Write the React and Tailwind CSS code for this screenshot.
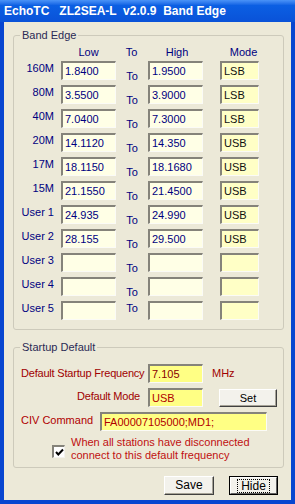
import React from "react";

const bands = [
  ["160M", "1.8400", "1.9500", "LSB"],
  ["80M", "3.5500", "3.9000", "LSB"],
  ["40M", "7.0400", "7.3000", "LSB"],
  ["20M", "14.1120", "14.350", "USB"],
  ["17M", "18.1150", "18.1680", "USB"],
  ["15M", "21.1550", "21.4500", "USB"],
  ["User 1", "24.935", "24.990", "USB"],
  ["User 2", "28.155", "29.500", "USB"],
  ["User 3", "", "", ""],
  ["User 4", "", "", ""],
  ["User 5", "", "", ""],
];

const sunken =
  "border-t-2 border-l-2 border-r border-b border-t-[#85837a] border-l-[#85837a] border-r-[#fbfbf6] border-b-[#fbfbf6]";

function Box({ value, className }) {
  return (
    <div className={`h-[19px] ${sunken} pl-[2px] leading-[16px] whitespace-nowrap overflow-hidden ${className}`}>
      {value}
    </div>
  );
}

function Btn({ children, className }) {
  return (
    <div
      className={`h-[18px] flex items-center justify-center border border-t-white border-l-white border-r-[#404040] border-b-[#404040] bg-[#f3f2ec] shadow-[inset_-1px_-1px_0_#a6a397] text-black ${className}`}
    >
      {children}
    </div>
  );
}

export default function App() {
  return (
    <div className="w-[295px] h-[504px] flex flex-col bg-[#0846d0] font-['Liberation_Sans',Arial,sans-serif] text-[11px] leading-[13px]">
      {/* title bar */}
      <div className="h-[22px] shrink-0 flex items-center pl-[4px] bg-linear-to-b from-[#4a93f7] via-[#0b5fe3] via-25% to-[#0a52d8] text-white font-bold text-[12px] whitespace-pre">
        {"EchoTC   ZL2SEA-L  v2.0.9  Band Edge"}
      </div>

      <div className="flex-1 mx-[4px] mb-[4px] bg-[#ece9d8] flex flex-col">
        {/* Band Edge group */}
        <fieldset className="ml-[9px] mt-[7px] w-[271px] border border-[#cdcabb] rounded-[3px] px-0 pt-[4px] pb-[4px]">
          <legend className="ml-[6px] px-[2px] text-[#2a2a55]">Band Edge</legend>
          <div className="flex text-[#000080] h-[13px] mb-[2px]">
            <div className="w-[63px]" />
            <div className="w-[23px] text-center">Low</div>
            <div className="w-[24px]" />
            <div className="w-[15px] text-center">To</div>
            <div className="w-[25px]" />
            <div className="w-[26px] text-center">High</div>
            <div className="w-[37px]" />
            <div className="w-[33px] text-center">Mode</div>
          </div>
          {bands.map(([name, low, high, mode], i) => (
            <div key={name} className="flex h-[24px] items-start">
              <div className="w-[41px] text-right pr-[1px] pt-[1px] text-[#000080]">{name}</div>
              <Box value={low} className="ml-[6px] w-[55px] bg-[#ffffe6] text-[#000080]" />
              <div className={`w-[32px] text-center text-[#000080] ${i === bands.length - 1 ? "pt-[1px]" : "pt-[9px]"}`}>To</div>
              <Box value={high} className="w-[55px] bg-[#ffffe6] text-[#000080]" />
              <Box value={mode} className="ml-[17px] w-[39px] bg-[#ffffc6] text-[#101010]" />
            </div>
          ))}
        </fieldset>

        {/* Startup Default group */}
        <fieldset className="ml-[9px] mt-[11px] w-[271px] border border-[#cdcabb] rounded-[3px] px-0 pt-[10px] pb-[5px]">
          <legend className="ml-[6px] px-[2px] text-[#2a2a55]">Startup Default</legend>

          <div className="flex items-start h-[24px]">
            <div className="w-[134px] pl-[7px] pt-[3px] text-[#a00000] tracking-[-0.2px] whitespace-nowrap">Default Startup Frequency</div>
            <Box value="7.105" className="w-[55px] bg-[#ffff84] text-[#8a0000]" />
            <div className="ml-[9px] pt-[3px] text-[#a00000]">MHz</div>
          </div>

          <div className="flex items-start h-[24px]">
            <div className="w-[134px] pr-[8px] pt-[2px] text-right text-[#a00000] tracking-[-0.2px]">Default Mode</div>
            <Box value="USB" className="w-[55px] bg-[#ffff84] text-[#b00000]" />
            <Btn className="ml-[16px] mt-[1px] w-[58px] h-[17px]">Set</Btn>
          </div>

          <div className="flex items-start h-[24px]">
            <div className="w-[86px] pl-[7px] pt-[2px] text-[#b00000] whitespace-nowrap">CIV Command</div>
            <Box value="FA00007105000;MD1;" className="w-[167px] bg-[#ffff84] text-[#b00000]" />
          </div>

          <div className="flex items-start">
            <div className="ml-[38px] mt-[9px] w-[13px] h-[13px] bg-white border-t-2 border-l-2 border-r border-b border-t-[#85837a] border-l-[#85837a] border-r-[#f4f3ee] border-b-[#f4f3ee] flex items-center justify-center">
              <svg width="9" height="9" viewBox="0 0 9 9">
                <path d="M1 4 L3.3 6.5 L8 1.5" stroke="#000" strokeWidth="2" fill="none" />
              </svg>
            </div>
            <div className="ml-[6px] text-[#c01010] leading-[13px]">
              <div>When all stations have disconnected</div>
              <div>connect to this default frequency</div>
            </div>
          </div>
        </fieldset>

        {/* buttons */}
        <div className="flex justify-end gap-[15px] mt-[8px] pr-[13px]">
          <Btn className="w-[50px] h-[19px] text-[12px]">Save</Btn>
          <div className="w-[49px] h-[19px] border border-black flex">
            <div className="flex-1 flex items-center justify-center border border-t-white border-l-white border-r-[#606060] border-b-[#606060] bg-[#f3f2ec]">
              <span className="px-[3px] border border-dotted border-black leading-[12px] text-[12px]">Hide</span>
            </div>
          </div>
        </div>
      </div>
    </div>
  );
}
